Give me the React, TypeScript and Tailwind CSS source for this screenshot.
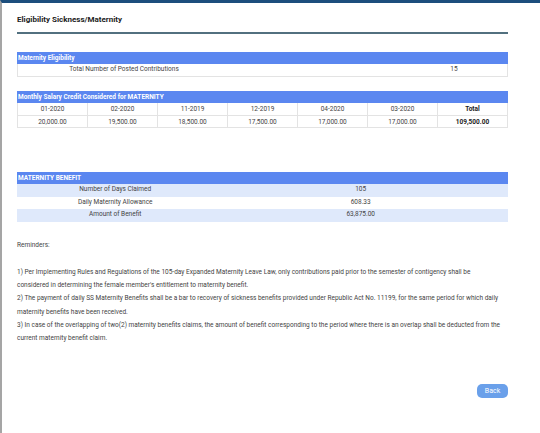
import React from 'react';

const months = [
  { label: '01-2020', value: '20,000.00' },
  { label: '02-2020', value: '19,500.00' },
  { label: '11-2019', value: '18,500.00' },
  { label: '12-2019', value: '17,500.00' },
  { label: '04-2020', value: '17,000.00' },
  { label: '03-2020', value: '17,000.00' },
];

const benefit = [
  { label: 'Number of Days Claimed', value: '105', shade: true },
  { label: 'Daily Maternity Allowance', value: '608.33', shade: false },
  { label: 'Amount of Benefit', value: '63,875.00', shade: true },
];

function SectionHeader({ title }: { title: string }) {
  return (
    <div className="h-[12px] bg-[#5b87f0] text-white font-bold text-[6.5px] leading-[12px] pl-[1px]">
      {title}
    </div>
  );
}

export default function App() {
  return (
    <div
      className="w-[540px] h-[433px] bg-white border-t-[3px] border-t-[#1d4e7d] border-l-2 border-l-[#a5a5a5] text-[#444] overflow-hidden"
      style={{ fontFamily: 'Roboto, "Liberation Sans", sans-serif' }}
    >
      <div className="pl-[15px] pr-[32px] pt-[11px]">
        {/* Title */}
        <h1 className="text-[8px] leading-[12px] font-bold text-[#222]">Eligibility Sickness/Maternity</h1>
        <div className="mt-[6px] h-[2px] bg-[#52707f]"></div>

        {/* Maternity Eligibility */}
        <div className="mt-[18px]">
          <SectionHeader title="Maternity Eligibility" />
          <div className="flex h-[13px] items-center border-x border-b border-[#e3e3e3] text-[6.5px]">
            <div className="w-[212px] text-center">Total Number of Posted Contributions</div>
            <div className="flex-1"></div>
            <div className="w-[106px] text-center">15</div>
          </div>
        </div>

        {/* Monthly Salary Credit */}
        <div className="mt-[14px]">
          <SectionHeader title="Monthly Salary Credit Considered for MATERNITY" />
          <div className="grid grid-cols-7 border-l border-[#e3e3e3] text-[6.5px] text-center">
            {months.map((m) => (
              <div key={m.label} className="h-[13px] leading-[13px] border-r border-b border-[#e3e3e3]">
                {m.label}
              </div>
            ))}
            <div className="h-[13px] leading-[13px] border-r border-b border-[#e3e3e3] font-bold text-[#222]">Total</div>
            {months.map((m) => (
              <div key={m.label + 'v'} className="h-[12px] leading-[12px] border-r border-b border-[#e3e3e3]">
                {m.value}
              </div>
            ))}
            <div className="h-[12px] leading-[12px] border-r border-b border-[#e3e3e3] font-bold text-[#222]">
              109,500.00
            </div>
          </div>
        </div>

        {/* Maternity Benefit */}
        <div className="mt-[44px]">
          <SectionHeader title="MATERNITY BENEFIT" />
          {benefit.map((b) => (
            <div
              key={b.label}
              className={`flex h-[12.5px] items-center text-[6.5px] ${b.shade ? 'bg-[#dfe9fb]' : 'bg-white'}`}
            >
              <div className="w-[40%] text-center">{b.label}</div>
              <div className="w-[60%] text-center">{b.value}</div>
            </div>
          ))}
        </div>

        {/* Reminders */}
        <div className="mt-[17px] w-[486px] text-[6.5px] leading-[13.3px]">
          <p>Reminders:</p>
          <div className="mt-[14px]">
            <p>
              1) Per Implementing Rules and Regulations of the 105-day Expanded Maternity Leave Law, only contributions
              paid prior to the semester of contigency shall be considered in determining the female member's
              entitlement to maternity benefit.
            </p>
            <p>
              2) The payment of daily SS Maternity Benefits shall be a bar to recovery of sickness benefits provided
              under Republic Act No. 11199, for the same period for which daily maternity benefits have been received.
            </p>
            <p>
              3) In case of the overlapping of two(2) maternity benefits claims, the amount of benefit corresponding to
              the period where there is an overlap shall be deducted from the current maternity benefit claim.
            </p>
          </div>
        </div>

        {/* Back */}
        <div className="flex justify-end mt-[38px]">
          <button className="w-[31px] h-[14px] rounded-[5px] bg-[#6aa0ea] text-white text-[7px] leading-[14px]">
            Back
          </button>
        </div>
      </div>
    </div>
  );
}
